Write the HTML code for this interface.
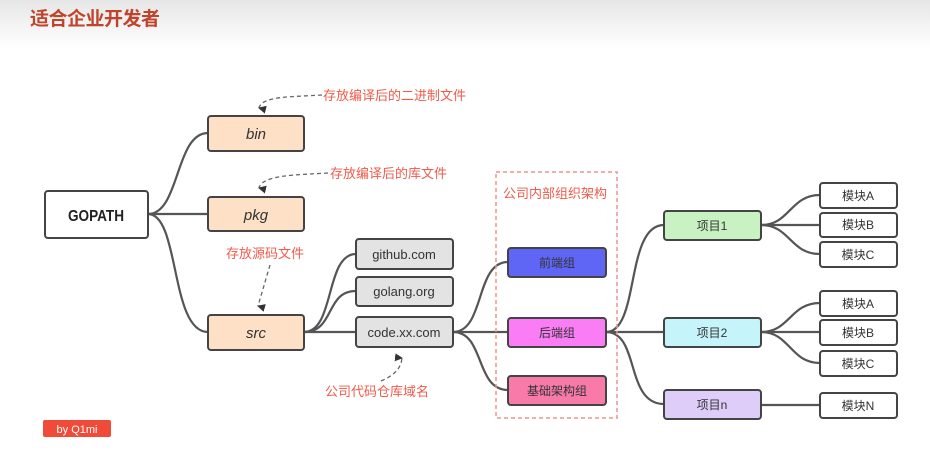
<!DOCTYPE html>
<html><head><meta charset="utf-8"><style>
html,body{margin:0;padding:0;width:930px;height:471px;overflow:hidden;background:#fff}
.hdr{position:absolute;left:0;top:0;width:930px;height:48px;background:linear-gradient(#e6e6e6,#fff)}
.t{position:absolute;left:30px;top:4px;font:bold 19px "Noto Sans CJK SC",sans-serif;color:#c0442c;letter-spacing:-0.5px}
svg{position:absolute;left:0;top:0}
text{font-family:"Liberation Sans","Noto Sans CJK SC",sans-serif}
</style></head><body>
<div class="hdr"></div>
<div class="t">适合企业开发者</div>
<svg width="930" height="471" viewBox="0 0 930 471">
<defs><marker id="ar" markerWidth="8" markerHeight="8" refX="4" refY="7" orient="auto-start-reverse" markerUnits="userSpaceOnUse"><path d="M0,0 L8,0 L4,8 Z" fill="#333"/></marker></defs>
<g fill="none" stroke="#555" stroke-width="2.2">
<path d="M148,214 C180,214 175,133 208,133"/>
<path d="M148,214 L208,214"/>
<path d="M148,214 C180,214 170,332 208,332"/>
<path d="M304,332 C335,332 325,254 356,254"/>
<path d="M304,332 C335,332 325,291 356,291"/>
<path d="M304,332 L356,332"/>
<path d="M453,332 C485,332 475,262 508,262"/>
<path d="M453,332 L508,332"/>
<path d="M453,332 C485,332 475,390 508,390"/>
<path d="M606,332 C640,332 625,225 664,225"/>
<path d="M606,332 L664,332"/>
<path d="M606,332 C640,332 625,404 664,404"/>
<path d="M761,225 C790,225 790,195 820,195"/>
<path d="M761,225 L820,225"/>
<path d="M761,225 C790,225 790,254 820,254"/>
<path d="M761,332 C790,332 790,303 820,303"/>
<path d="M761,332 L820,332"/>
<path d="M761,332 C790,332 790,363 820,363"/>
<path d="M761,405 L820,405"/>
</g>
<g fill="none" stroke="#666" stroke-width="1.3" stroke-dasharray="4,3">
<path d="M322,95 C290,97 262,96 259,108" marker-end="url(#ar)"/>
<path d="M328,173 C295,175 262,175 259,188" marker-end="url(#ar)"/>
<path d="M270,265 L258,306" marker-end="url(#ar)"/>
<path d="M381,381 C395,375 401,368 402,358" marker-end="url(#ar)"/>
</g>
<rect x="496" y="172" width="121" height="246" fill="none" stroke="#f0948a" stroke-width="1.5" stroke-dasharray="4,3"/>
<g stroke="#444" stroke-width="2">
<rect x="45" y="191" width="103" height="47" rx="3" fill="#fff"/>
<rect x="208" y="116" width="96" height="35" rx="3" fill="#fde0c5"/>
<rect x="208" y="197" width="96" height="34" rx="3" fill="#fde0c5"/>
<rect x="208" y="315" width="96" height="35" rx="3" fill="#fde0c5"/>
<rect x="356" y="239" width="97" height="30" rx="3" fill="#e3e3e3"/>
<rect x="356" y="277" width="97" height="29" rx="3" fill="#e3e3e3"/>
<rect x="356" y="317" width="97" height="30" rx="3" fill="#e3e3e3"/>
<rect x="508" y="248" width="98" height="29" rx="3" fill="#5f66f5"/>
<rect x="508" y="318" width="98" height="29" rx="3" fill="#fa7df6"/>
<rect x="508" y="376" width="98" height="29" rx="3" fill="#f87aa9"/>
<rect x="664" y="211" width="97" height="29" rx="3" fill="#c9f2c2"/>
<rect x="664" y="318" width="97" height="29" rx="3" fill="#c6f4fb"/>
<rect x="664" y="390" width="97" height="29" rx="3" fill="#ddcdf8"/>
<g fill="#fff">
<rect x="820" y="183" width="77" height="25" rx="3"/>
<rect x="820" y="213" width="77" height="24" rx="3"/>
<rect x="820" y="242" width="77" height="25" rx="3"/>
<rect x="820" y="291" width="77" height="25" rx="3"/>
<rect x="820" y="320" width="77" height="25" rx="3"/>
<rect x="820" y="351" width="77" height="25" rx="3"/>
<rect x="820" y="393" width="77" height="25" rx="3"/>
</g></g>
<g text-anchor="middle" fill="#333" font-size="13">
<text x="96" y="221" font-weight="bold" font-size="16" fill="#222" transform="translate(96 0) scale(0.85 1) translate(-96 0)">GOPATH</text>
<text x="256" y="139" font-style="italic" font-size="15">bin</text>
<text x="256" y="220" font-style="italic" font-size="15">pkg</text>
<text x="256" y="338" font-style="italic" font-size="15">src</text>
<text x="404" y="259">github.com</text>
<text x="404" y="296">golang.org</text>
<text x="404" y="337">code.xx.com</text>
<text x="557" y="267" font-size="12">前端组</text>
<text x="557" y="337" font-size="12">后端组</text>
<text x="557" y="395" font-size="12">基础架构组</text>
<text x="712" y="230" font-size="12">项目1</text>
<text x="712" y="337" font-size="12">项目2</text>
<text x="712" y="409" font-size="12">项目n</text>
<g font-size="12"><text x="858" y="200">模块A</text><text x="858" y="229">模块B</text><text x="858" y="259">模块C</text><text x="858" y="308">模块A</text><text x="858" y="337">模块B</text><text x="858" y="368">模块C</text><text x="858" y="410">模块N</text></g>
</g>
<g fill="#f05a4a" font-size="13">
<text x="323" y="100">存放编译后的二进制文件</text>
<text x="330" y="178">存放编译后的库文件</text>
<text x="226" y="258">存放源码文件</text>
<text x="325" y="396">公司代码仓库域名</text>
<text x="503" y="198">公司内部组织架构</text>
</g>
<rect x="43" y="420" width="68" height="17" rx="2" fill="#f04a38"/>
<text x="77" y="433" text-anchor="middle" fill="#fff" font-size="11">by Q1mi</text>
</svg>
</body></html>
